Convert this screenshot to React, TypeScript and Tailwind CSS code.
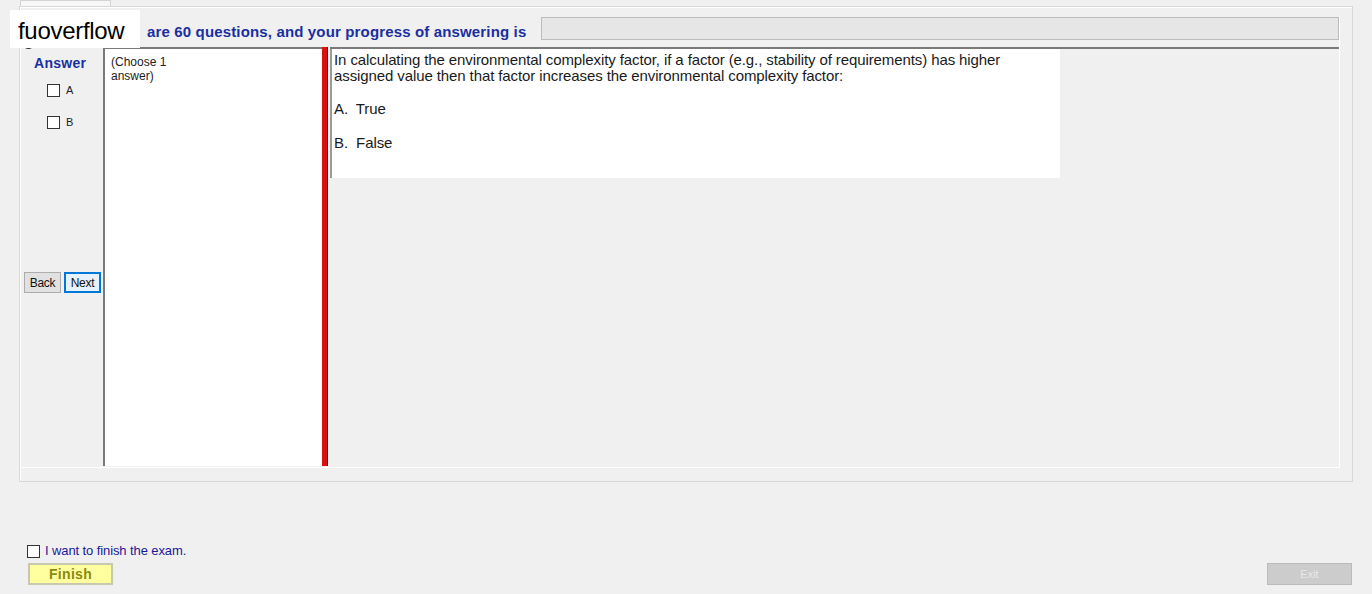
import React from "react";

export default function App() {
  const font = { fontFamily: '"Liberation Sans", Arial, sans-serif' };
  return (
    <div className="relative w-[1372px] h-[594px] bg-[#f0f0f0] overflow-hidden" style={font}>
      {/* top tab */}
      <div className="ml-[20px] w-[91px] h-[6px] border border-b-0 border-[#d4d4d4] bg-[#f7f7f7]" />
      {/* group box */}
      <div className="ml-[19px] w-[1334px] h-[476px] border border-[#d8d8d8] shadow-[inset_1px_1px_0_#ffffff] pl-[2px] pt-[10px]">
        <div className="w-[1318px] h-[451px] flex flex-col border-r border-b border-white">
          {/* header */}
          <div className="flex h-[23px] items-center">
            <div className="w-[125px]" />
            <div className="w-[394px] whitespace-nowrap text-[15px] font-bold text-[#1a2fa0] tracking-[0.15px] pt-[8px]">
              are 60 questions, and your progress of answering is
            </div>
            <div className="w-[798px] h-[23px] bg-[#e6e6e6] border border-[#bcbcbc]" />
          </div>
          <div className="h-[7px]" />
          {/* content */}
          <div className="flex h-[419px]">
            {/* left column */}
            <div className="w-[81px] flex flex-col">
              <div className="pl-[12px] pt-[8px] text-[14px] leading-[16px] font-bold text-[#1a2fa0] tracking-[0.3px]">Answer</div>
              <div className="flex items-center pl-[25px] mt-[13px] h-[13px]">
                <div className="w-[13px] h-[13px] border border-[#333333] bg-white" />
                <span className="ml-[6px] text-[11px] text-[#222222]">A</span>
              </div>
              <div className="flex items-center pl-[25px] mt-[19px] h-[13px]">
                <div className="w-[13px] h-[13px] border border-[#333333] bg-white" />
                <span className="ml-[6px] text-[11px] text-[#222222]">B</span>
              </div>
              <div className="flex pl-[2px] mt-[143px] gap-[3px]">
                <div className="w-[37px] h-[21px] bg-[#e1e1e1] border border-[#adadad] flex items-center justify-center text-[12px] text-[#111111] tracking-[-0.3px]">Back</div>
                <div className="w-[37px] h-[21px] bg-[#e5f1fb] border-2 border-[#0078d7] flex items-center justify-center text-[12px] text-[#111111] tracking-[-0.3px]">Next</div>
              </div>
            </div>
            {/* middle panel */}
            <div className="w-[219px] h-[419px] bg-white border-l-2 border-t-2 border-[#7a7a7a] pl-[6px] pt-[6px] text-[12px] leading-[14px] text-[#222222]">
              (Choose 1<br />answer)
            </div>
            {/* red bar */}
            <div className="w-[6px] h-[419px] bg-[#d81010] border-r border-[#9a0000]" />
            {/* right area */}
            <div className="flex-1 h-[419px] pl-[2px]">
              <div className="h-[2px] bg-[#7a7a7a]" />
              <div className="w-[730px] h-[129px] bg-white border-l-2 border-[#9a9a9a] pl-[2px] pt-[3px] text-[15px] leading-[16px] text-[#1a1a1a] tracking-[-0.1px]">
                <div className="whitespace-nowrap">In calculating the environmental complexity factor, if a factor (e.g., stability of requirements) has higher</div>
                <div className="whitespace-nowrap">assigned value then that factor increases the environmental complexity factor:</div>
                <div className="mt-[17px]">A.&nbsp; True</div>
                <div className="mt-[18px]">B.&nbsp; False</div>
              </div>
            </div>
          </div>
        </div>
      </div>
      {/* bottom */}
      <div className="flex items-center ml-[27px] mt-[62px] h-[14px]">
        <div className="w-[13px] h-[13px] border border-[#333333] bg-white" />
        <span className="ml-[5px] text-[13px] text-[#1a1a9a] tracking-[-0.1px]">I want to finish the exam.</span>
      </div>
      <div className="flex justify-between items-center mt-[5px] pl-[28px] pr-[20px]">
        <div className="w-[85px] h-[22px] bg-[#ffffa0] border-2 border-[#c8c8b0] flex items-center justify-center text-[14px] font-bold text-[#8a8a10] tracking-[0.3px]">Finish</div>
        <div className="w-[85px] h-[22px] bg-[#cccccc] border border-[#bbbbbb] flex items-center justify-center text-[11px] text-[#e8e8e8]">Exit</div>
      </div>
      {/* partially hidden icon under logo */}
      <div className="absolute left-[22px] top-[36px] w-[13px] h-[13px] rounded-full bg-[#222222]" />
      {/* logo overlay */}
      <div className="absolute left-[10px] top-[10px] w-[130px] h-[38px] bg-white flex items-center pl-[8px] pt-[4px] text-[24px] text-black tracking-[-0.3px]">
        fuoverflow
      </div>
    </div>
  );
}
